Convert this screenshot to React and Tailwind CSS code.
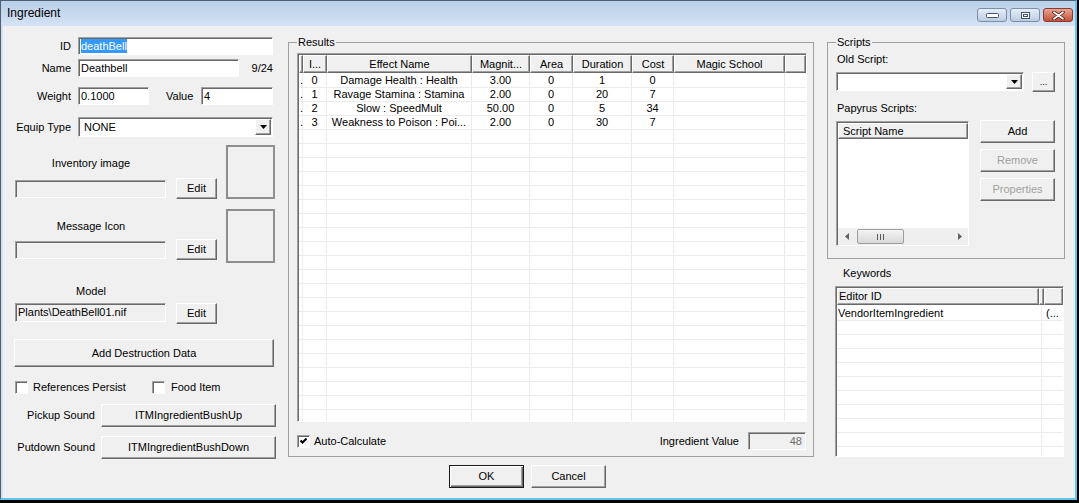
import React from 'react'

const sunken = 'border border-t-[#a0a0a0] border-l-[#a0a0a0] border-r-white border-b-white shadow-[inset_1px_1px_0_#696969]'
const raised = 'border border-t-white border-l-white border-r-[#696969] border-b-[#696969] shadow-[inset_-1px_-1px_0_#a0a0a0]'

function Field({ className = '', disabled = false, children }) {
  return (
    <div className={`${sunken} ${disabled ? 'bg-[#f0f0f0]' : 'bg-white'} flex items-center px-[2px] whitespace-nowrap overflow-hidden ${className}`}>
      {children}
    </div>
  )
}

function Btn({ className = '', disabled = false, children }) {
  return (
    <button type="button" className={`${raised} bg-[#f0f0f0] flex items-center justify-center whitespace-nowrap ${disabled ? 'text-[#a0a0a0]' : ''} ${className}`}>
      {children}
    </button>
  )
}

function Arrow({ className = '' }) {
  return (
    <span className={`${raised} bg-[#f0f0f0] flex items-center justify-center shrink-0 ${className}`}>
      <svg width="7" height="4" viewBox="0 0 7 4"><path d="M0 0H7L3.5 4Z" fill="#000" /></svg>
    </span>
  )
}

function Combo({ className = '', arrow = '', children }) {
  return (
    <div className={`${sunken} bg-white flex items-center pl-[5px] pr-[1px] ${className}`}>
      <span className="flex-1">{children}</span>
      <Arrow className={arrow} />
    </div>
  )
}

function Check({ checked = false }) {
  return (
    <span className={`${sunken} bg-white w-[13px] h-[13px] flex items-center justify-center shrink-0`}>
      {checked && (
        <svg width="7" height="7" viewBox="0 0 7 7"><path d="M0.5 2.5L2.5 4.5L6.5 0.5" stroke="#000" strokeWidth="2" fill="none" /></svg>
      )}
    </span>
  )
}

function Group({ title, className = '', children }) {
  return (
    <fieldset className={`border border-[#a0a0a0] ${className}`}>
      <legend className="px-[1px] leading-[13px]">{title}</legend>
      {children}
    </fieldset>
  )
}

const colW = ['w-[4px]', 'w-[24px]', 'w-[145px]', 'w-[58px]', 'w-[43px]', 'w-[59px]', 'w-[42px]', 'w-[111px]']
const heads = ['', 'I...', 'Effect Name', 'Magnit...', 'Area', 'Duration', 'Cost', 'Magic School']
const effects = [
  ['.', '0', 'Damage Health : Health', '3.00', '0', '1', '0', ''],
  ['.', '1', 'Ravage Stamina : Stamina', '2.00', '0', '20', '7', ''],
  ['.', '2', 'Slow : SpeedMult', '50.00', '0', '5', '34', ''],
  ['.', '3', 'Weakness to Poison : Poi...', '2.00', '0', '30', '7', ''],
]

function ResultsTable() {
  const rows = [...effects]
  while (rows.length < 25) rows.push(['', '', '', '', '', '', '', ''])
  return (
    <div className={`${sunken} bg-white w-[510px] h-[369px] pl-[1px] pt-[1px] overflow-hidden flex flex-col`}>
      <div className="h-[19px] shrink-0 flex items-start">
        {heads.map((h, i) => (
          <div key={i} className={`${raised} ${colW[i]} h-[18px] shrink-0 bg-[#f0f0f0] flex items-center justify-center overflow-hidden whitespace-nowrap`}>{h}</div>
        ))}
        <div className={`${raised} flex-1 h-[18px] bg-[#f0f0f0]`} />
      </div>
      {rows.map((r, ri) => (
        <div key={ri} className="h-[14px] shrink-0 flex border-b border-[#ebebeb]">
          {r.map((c, ci) => (
            <div key={ci} className={`${colW[ci]} shrink-0 h-full border-r border-[#ebebeb] whitespace-nowrap ${ci === 0 ? 'pl-[1px]' : 'text-center overflow-hidden'}`}>{c}</div>
          ))}
        </div>
      ))}
    </div>
  )
}

function HScroll() {
  return (
    <div className="h-[17px] shrink-0 flex items-center bg-[#efefef]">
      <div className="w-[17px] h-full flex items-center justify-center">
        <svg width="4" height="7" viewBox="0 0 4 7"><path d="M4 0L0 3.5L4 7Z" fill="#606060" /></svg>
      </div>
      <div className="ml-[2px] w-[47px] h-[15px] rounded-[2px] border border-[#9d9d9d] bg-linear-to-b from-[#f4f4f4] to-[#d9d9d9] flex items-center justify-center gap-[2px]">
        <span className="w-[1px] h-[6px] bg-[#5a5a5a]" />
        <span className="w-[1px] h-[6px] bg-[#5a5a5a]" />
        <span className="w-[1px] h-[6px] bg-[#5a5a5a]" />
      </div>
      <div className="flex-1" />
      <div className="w-[17px] h-full flex items-center justify-center">
        <svg width="4" height="7" viewBox="0 0 4 7"><path d="M0 0L4 3.5L0 7Z" fill="#606060" /></svg>
      </div>
    </div>
  )
}

function Keywords() {
  const rows = [['VendorItemIngredient', '(...']]
  while (rows.length < 11) rows.push(['', ''])
  return (
    <div className={`${sunken} bg-white w-[229px] h-[171px] pl-[1px] pt-[1px] overflow-hidden flex flex-col`}>
      <div className="h-[19px] shrink-0 flex items-start">
        <div className={`${raised} w-[202px] h-[17px] shrink-0 bg-[#f0f0f0] flex items-center pl-[1px]`}>Editor ID</div>
        <div className={`${raised} w-[5px] h-[17px] shrink-0 bg-[#f0f0f0]`} />
        <div className={`${raised} flex-1 h-[17px] bg-[#f0f0f0]`} />
      </div>
      {rows.map((r, i) => (
        <div key={i} className="h-[14px] shrink-0 flex border-b border-[#ebebeb]">
          <div className="w-[205px] shrink-0 border-r border-[#ebebeb] pl-[1px] whitespace-nowrap">{r[0]}</div>
          <div className="flex-1 pl-[4px] whitespace-nowrap overflow-hidden">{r[1]}</div>
        </div>
      ))}
    </div>
  )
}

function ImageBlock({ label, labelTop, rowTop }) {
  return (
    <div className="flex items-start">
      <div className="w-[203px] flex flex-col">
        <span className={`ml-[1px] w-[152px] text-center ${labelTop}`}>{label}</span>
        <div className={`flex items-center h-[21px] ${rowTop}`}>
          <Field disabled className="ml-[1px] w-[151px] h-[18px]" />
          <Btn className="ml-[10px] w-[41px] h-[21px]">Edit</Btn>
        </div>
      </div>
      <div className="ml-[9px] w-[49px] h-[54px] border-2 border-[#8e8e8e]" />
    </div>
  )
}

function LeftColumn() {
  return (
    <div className="w-[262px] mt-[1px] flex flex-col">
      <div className="w-[259px] flex items-center h-[18px]">
        <span className="w-[57px] text-right">ID</span>
        <Field className="ml-[7px] w-[195px] h-[18px]">
          <span className="bg-[#3399ff] text-white leading-[14px] h-[14px]">deathBell</span>
        </Field>
      </div>
      <div className="w-[259px] mt-[4px] flex items-center h-[18px]">
        <span className="w-[57px] text-right">Name</span>
        <Field className="ml-[7px] w-[161px] h-[18px]">Deathbell</Field>
        <span className="ml-auto">9/24</span>
      </div>
      <div className="w-[259px] mt-[10px] flex items-center h-[18px]">
        <span className="w-[57px] text-right">Weight</span>
        <Field className="ml-[7px] w-[71px] h-[18px]">0.1000</Field>
        <span className="ml-[17px]">Value</span>
        <Field className="ml-auto w-[72px] h-[18px]">4</Field>
      </div>
      <div className="w-[259px] mt-[12px] flex items-center h-[20px]">
        <span className="w-[57px] text-right">Equip Type</span>
        <Combo className="ml-[7px] w-[195px] h-[20px]" arrow="w-[16px] h-[16px]">NONE</Combo>
      </div>
      <div className="mt-[8px]">
        <ImageBlock label="Inventory image" labelTop="mt-[12px]" rowTop="mt-[8px]" />
      </div>
      <div className="mt-[10px]">
        <ImageBlock label="Message Icon" labelTop="mt-[11px]" rowTop="mt-[6px]" />
      </div>
      <span className="mt-[22px] ml-[1px] w-[152px] text-center">Model</span>
      <div className="mt-[5px] flex items-start">
        <Field disabled className="ml-[1px] w-[151px] h-[19px]">Plants\DeathBell01.nif</Field>
        <Btn className="ml-[10px] w-[41px] h-[21px]">Edit</Btn>
      </div>
      <Btn className="mt-[15px] w-[260px] h-[28px]">Add Destruction Data</Btn>
      <div className="mt-[14px] ml-[1px] flex items-center h-[13px]">
        <div className="w-[137px] flex items-center">
          <Check />
          <span className="ml-[5px]">References Persist</span>
        </div>
        <Check />
        <span className="ml-[6px]">Food Item</span>
      </div>
      <div className="mt-[10px] flex items-center">
        <span className="w-[81px] text-right">Pickup Sound</span>
        <Btn className="ml-[6px] w-[175px] h-[23px]">ITMIngredientBushUp</Btn>
      </div>
      <div className="mt-[9px] flex items-center">
        <span className="w-[81px] text-right">Putdown Sound</span>
        <Btn className="ml-[6px] w-[175px] h-[23px]">ITMIngredientBushDown</Btn>
      </div>
    </div>
  )
}

function RightColumn() {
  return (
    <div className="w-[238px] flex flex-col">
      <Group title="Scripts" className="pl-[8px] pr-[9px] pb-[12px]">
        <div className="mt-[4px] ml-[1px]">Old Script:</div>
        <div className="mt-[6px] flex items-start">
          <Combo className="w-[188px] h-[19px]" arrow="w-[16px] h-[15px]" />
          <Btn className="ml-[8px] w-[23px] h-[20px] text-[9px]">...</Btn>
        </div>
        <div className="mt-[10px] ml-[1px]">Papyrus Scripts:</div>
        <div className="mt-[6px] flex items-start">
          <div className={`${sunken} bg-white w-[133px] h-[125px] pl-[1px] pt-[1px] flex flex-col overflow-hidden`}>
            <div className={`${raised} h-[16px] shrink-0 bg-[#f0f0f0] flex items-center pl-[4px]`}>Script Name</div>
            <div className="flex-1" />
            <HScroll />
          </div>
          <div className="ml-[11px] -mt-[1px] flex flex-col gap-[6px]">
            <Btn className="w-[75px] h-[23px]">Add</Btn>
            <Btn disabled className="w-[75px] h-[23px]">Remove</Btn>
            <Btn disabled className="w-[75px] h-[23px]">Properties</Btn>
          </div>
        </div>
      </Group>
      <span className="mt-[8px] ml-[16px]">Keywords</span>
      <div className="mt-[6px] ml-[8px]">
        <Keywords />
      </div>
    </div>
  )
}

function CaptionButtons() {
  return (
    <div className="ml-auto mt-[7px] mr-[2px] flex gap-[3px]">
      <div className="w-[30px] h-[14px] rounded-[3px] border border-[#7d8fa6] bg-linear-to-b from-[#e6eef8] to-[#bccde2] flex items-end justify-center pb-[3px]">
        <svg width="13" height="5" viewBox="0 0 13 5"><rect x="0.5" y="0.5" width="12" height="4" rx="1" fill="#fff" stroke="#44546a" /></svg>
      </div>
      <div className="w-[30px] h-[14px] rounded-[3px] border border-[#7d8fa6] bg-linear-to-b from-[#e6eef8] to-[#bccde2] flex items-center justify-center">
        <svg width="9" height="7" viewBox="0 0 9 7"><rect x="0.5" y="0.5" width="8" height="6" fill="#fff" stroke="#44546a" /><rect x="2.5" y="2.5" width="4" height="2" fill="none" stroke="#44546a" /></svg>
      </div>
      <div className="w-[30px] h-[14px] rounded-[3px] border border-[#8b3a2e] bg-linear-to-b from-[#e9a595] to-[#c44e39] flex items-center justify-center">
        <svg width="13" height="9" viewBox="0 0 13 9">
          <path d="M2 1.2L11 7.8M11 1.2L2 7.8" stroke="#4a1d16" strokeWidth="3.4" strokeLinecap="round" />
          <path d="M2 1.2L11 7.8M11 1.2L2 7.8" stroke="#fff" strokeWidth="1.7" strokeLinecap="round" />
        </svg>
      </div>
    </div>
  )
}

export default function App() {
  return (
    <div className="w-[1079px] h-[503px] bg-black font-['Liberation_Sans',Arial,sans-serif] text-[11px] leading-[13px] text-black">
      <div className="w-[1077px] h-[500px] flex flex-col bg-[#d3e1f1] border-l border-t border-l-[#4f5f70] border-t-[#4f5f70] border-r-2 border-b-2 border-r-[#62c4ea] border-b-[#62c4ea]">
        <div className="h-[25px] shrink-0 flex items-start bg-linear-to-b from-[#b9cfe9] to-[#d4e2f3]">
          <span className="pl-[6px] pt-[5px] text-[12px] leading-[14px]">Ingredient</span>
          <CaptionButtons />
        </div>
        <div className="flex-1 ml-[2px] bg-[#f0f0f0] flex flex-col">
          <div className="pt-[10px] pl-[11px] flex items-start">
            <LeftColumn />
            <Group title="Results" className="ml-[12px] w-[526px] pl-[8px] pr-[6px] pb-[6px]">
              <div className="mt-[4px]">
                <ResultsTable />
              </div>
              <div className="mt-[10px] h-[18px] flex items-center">
                <Check checked />
                <span className="ml-[4px]">Auto-Calculate</span>
                <span className="ml-auto">Ingredient Value</span>
                <Field disabled className="ml-[9px] mr-[1px] w-[58px] h-[18px] justify-end pr-[3px] text-[#6d6d6d]">48</Field>
              </div>
            </Group>
            <div className="ml-[13px]">
              <RightColumn />
            </div>
          </div>
          <div className="mt-[6px] pl-[446px] flex gap-[7px]">
            <button type="button" className="w-[75px] h-[23px] bg-[#f0f0f0] border border-[#1a1a1a] shadow-[inset_1px_1px_0_#fff,inset_-1px_-1px_0_#696969,inset_-2px_-2px_0_#a0a0a0] flex items-center justify-center">OK</button>
            <Btn className="w-[75px] h-[23px]">Cancel</Btn>
          </div>
        </div>
      </div>
    </div>
  )
}
